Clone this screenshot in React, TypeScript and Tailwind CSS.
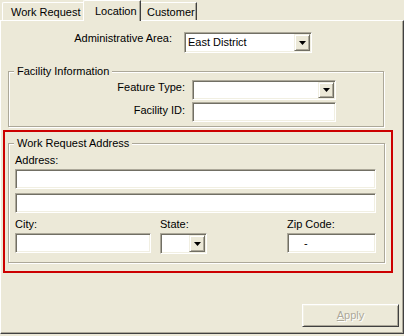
import React from "react";

function Arrow() {
  return (
    <svg width="7" height="4" viewBox="0 0 7 4" className="block">
      <polygon points="0,0 7,0 3.5,4" fill="#000" />
    </svg>
  );
}

function DropButton({ className = "" }: { className?: string }) {
  return (
    <div
      className={`flex items-center justify-center bg-[#ECE9D8] border border-t-[#F1EFE2] border-l-[#F1EFE2] border-b-[#716F64] border-r-[#716F64] shadow-[inset_1px_1px_0_#fff,inset_-1px_-1px_0_#ACA899] ${className}`}
    >
      <Arrow />
    </div>
  );
}

function Sunken({
  className = "",
  children,
}: {
  className?: string;
  children?: React.ReactNode;
}) {
  return (
    <div
      className={`bg-white p-[1px] border border-t-[#ACA899] border-l-[#ACA899] border-b-white border-r-white shadow-[inset_1px_1px_0_#716F64,inset_-1px_-1px_0_#F1EFE2] ${className}`}
    >
      {children}
    </div>
  );
}

function Group({
  title,
  className = "",
  children,
}: {
  title: string;
  className?: string;
  children?: React.ReactNode;
}) {
  return (
    <div
      className={`relative border border-[#ACA899] shadow-[inset_1px_1px_0_#fff,1px_1px_0_#fff] ${className}`}
    >
      <div className="absolute left-[5px] top-[-7px] px-[3px] bg-[#ECE9D8] leading-[13px]">
        {title}
      </div>
      {children}
    </div>
  );
}

export default function App() {
  return (
    <div className="w-[404px] h-[336px] bg-[#ECE9D8] text-[11px] leading-[13px] text-black font-['Liberation_Sans',Arial,sans-serif] overflow-hidden">
      {/* Tabs */}
      <div className="flex h-[20px] items-end pl-[2px]">
        <div className="w-[81px] h-[18px] border-t border-l border-white rounded-tl-[2px] pl-[8px] pt-[3px] whitespace-nowrap">
          Work Request
        </div>
        <div className="relative z-10 w-[58px] h-[21px] -mb-[1px] bg-[#ECE9D8] border-t border-l border-r border-t-white border-l-white border-r-[#404040] shadow-[inset_-1px_0_0_#ACA899] rounded-tl-[2px] pl-[11px] pt-[4px] whitespace-nowrap">
          Location
        </div>
        <div className="w-[56px] h-[18px] border-t border-r border-t-white border-r-[#404040] shadow-[inset_-1px_0_0_#ACA899] pl-[6px] pt-[3px] whitespace-nowrap">
          Customer
        </div>
      </div>

      {/* Panel */}
      <div className="h-[314px] border border-t-white border-l-white border-r-[#404040] border-b-[#404040] shadow-[inset_-1px_-1px_0_#ACA899]">
        {/* Administrative Area */}
        <div className="flex items-start mt-[11px]">
          <div className="w-[171px] text-right whitespace-nowrap">
            Administrative Area:
          </div>
          <Sunken className="ml-[12px] w-[128px] h-[21px] flex">
            <div className="flex-1 flex items-center pl-[2px]">
              East District
            </div>
            <DropButton className="w-[16px] h-full" />
          </Sunken>
        </div>

        {/* Facility Information */}
        <Group
          title="Facility Information"
          className="mt-[18px] ml-[7px] w-[376px] h-[56px]"
        >
          <div className="flex items-start pt-[8px]">
            <div className="w-[176px] text-right mt-[1px] whitespace-nowrap">
              Feature Type:
            </div>
            <Sunken className="ml-[7px] w-[144px] h-[20px] flex">
              <div className="flex-1" />
              <DropButton className="w-[16px] h-full" />
            </Sunken>
          </div>
          <div className="flex items-start mt-[2px]">
            <div className="w-[176px] text-right mt-[2px] whitespace-nowrap">
              Facility ID:
            </div>
            <Sunken className="ml-[7px] w-[144px] h-[20px]" />
          </div>
        </Group>

        {/* Red highlight */}
        <div className="mt-[3px] ml-[2px] w-[390px] h-[143px] border-2 border-[#CC0000]">
          <Group
            title="Work Request Address"
            className="mt-[11px] ml-[3px] w-[377px] h-[120px]"
          >
            <div className="pl-[6px] pt-[10px]">
              <div>Address:</div>
              <Sunken className="mt-[2px] w-[361px] h-[20px]" />
              <Sunken className="mt-[4px] w-[361px] h-[20px]" />
              <div className="flex mt-[5px]">
                <div className="w-[145px]">
                  <div>City:</div>
                  <Sunken className="mt-[2px] w-[136px] h-[20px]" />
                </div>
                <div className="w-[127px]">
                  <div>State:</div>
                  <Sunken className="mt-[2px] w-[47px] h-[21px] flex">
                    <div className="flex-1" />
                    <DropButton className="w-[16px] h-full" />
                  </Sunken>
                </div>
                <div>
                  <div>Zip Code:</div>
                  <Sunken className="mt-[2px] w-[89px] h-[20px] flex items-center pl-[16px]">
                    -
                  </Sunken>
                </div>
              </div>
            </div>
          </Group>
        </div>

        {/* Apply */}
        <div className="mt-[31px] ml-[301px] w-[97px] h-[23px] flex items-center justify-center bg-[#ECE9D8] border border-t-white border-l-white border-b-[#404040] border-r-[#404040] shadow-[inset_1px_1px_0_#F1EFE2,inset_-1px_-1px_0_#ACA899] text-[#ACA899] [text-shadow:1px_1px_0_#fff]">
          <span>
            <span className="underline">A</span>pply
          </span>
        </div>
      </div>
    </div>
  );
}
